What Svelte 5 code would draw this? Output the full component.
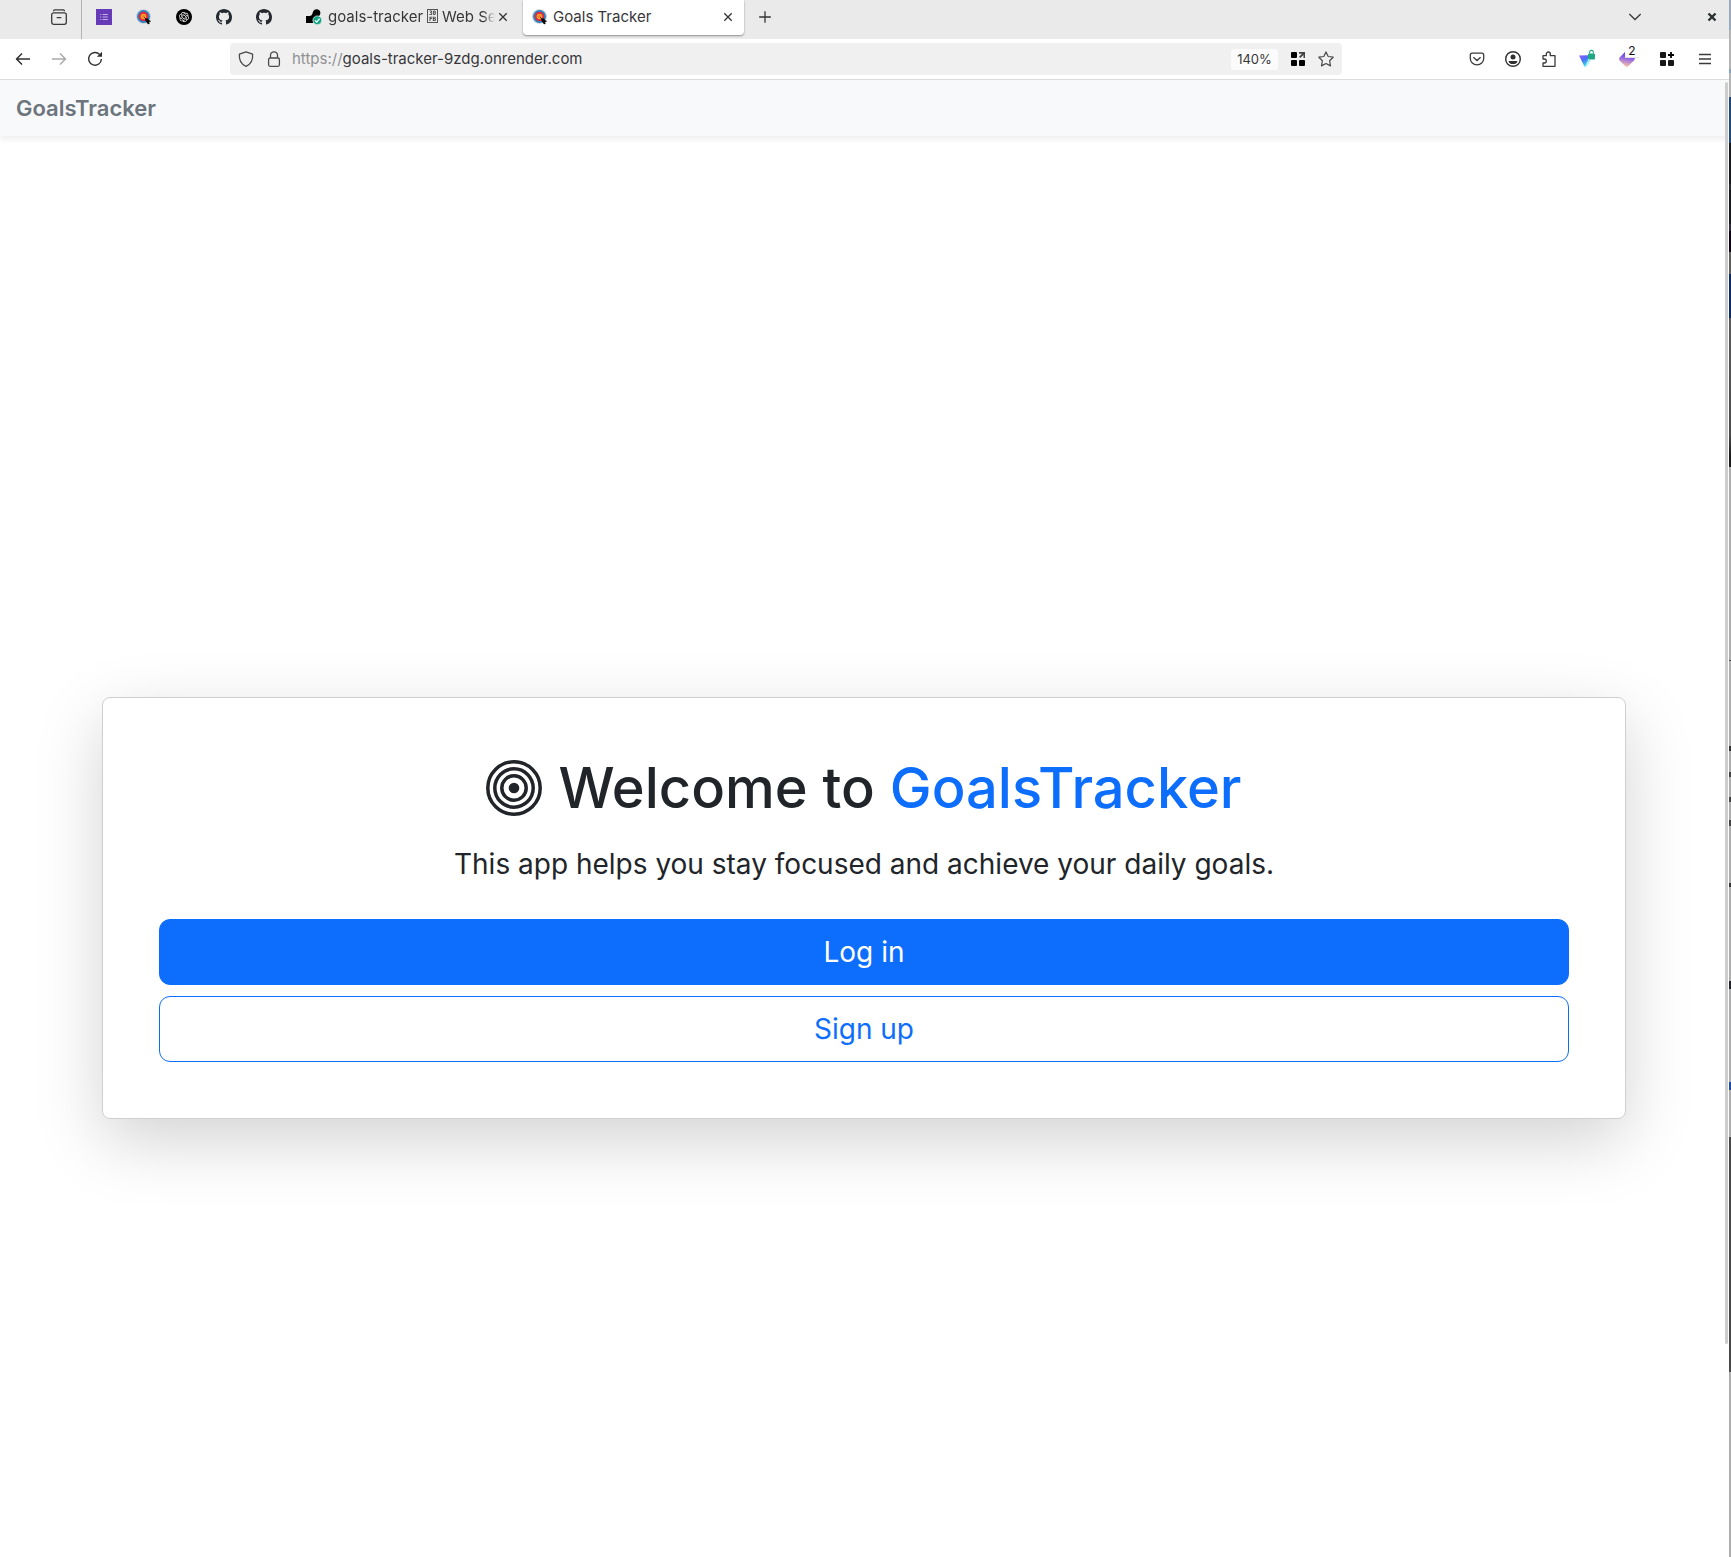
<script>
  const github =
    'M8 0C3.58 0 0 3.58 0 8c0 3.54 2.29 6.53 5.47 7.59.4.07.55-.17.55-.38 0-.19-.01-.82-.01-1.49-2.01.37-2.53-.49-2.69-.94-.09-.23-.48-.94-.82-1.13-.28-.15-.68-.52-.01-.53.63-.01 1.08.58 1.23.82.72 1.21 1.87.87 2.33.66.07-.52.28-.87.51-1.07-1.78-.2-3.64-.89-3.64-3.95 0-.87.31-1.59.82-2.15-.08-.2-.36-1.02.08-2.12 0 0 .67-.21 2.2.82.64-.18 1.32-.27 2-.27s1.36.09 2 .27c1.53-1.04 2.2-.82 2.2-.82.44 1.1.16 1.92.08 2.12.51.56.82 1.27.82 2.15 0 3.07-1.87 3.75-3.65 3.95.29.25.54.73.54 1.48 0 1.07-.01 1.93-.01 2.2 0 .21.15.46.55.38A8.01 8.01 0 0 0 16 8c0-4.42-3.58-8-8-8z';
  const knot =
    'M22.2819 9.8211a5.9847 5.9847 0 0 0-.5157-4.9108 6.0462 6.0462 0 0 0-6.5098-2.9A6.0651 6.0651 0 0 0 4.9807 4.1818a5.9847 5.9847 0 0 0-3.9977 2.9 6.0462 6.0462 0 0 0 .7427 7.0966 5.98 5.98 0 0 0 .511 4.9107 6.051 6.051 0 0 0 6.5146 2.9001A5.9847 5.9847 0 0 0 13.2599 24a6.0557 6.0557 0 0 0 5.7718-4.2058 5.9894 5.9894 0 0 0 3.9977-2.9001 6.0557 6.0557 0 0 0-.7475-7.0729zm-9.022 12.6081a4.4755 4.4755 0 0 1-2.8764-1.0408l.1419-.0804 4.7783-2.7582a.7948.7948 0 0 0 .3927-.6813v-6.7369l2.02 1.1686a.071.071 0 0 1 .038.052v5.5826a4.504 4.504 0 0 1-4.4945 4.4944zm-9.6607-4.1254a4.4708 4.4708 0 0 1-.5346-3.0137l.142.0852 4.783 2.7582a.7712.7712 0 0 0 .7806 0l5.8428-3.3685v2.3324a.0804.0804 0 0 1-.0332.0615L9.74 19.9502a4.4992 4.4992 0 0 1-6.1408-1.6464zM2.3408 7.8956a4.485 4.485 0 0 1 2.3655-1.9728V11.6a.7664.7664 0 0 0 .3879.6765l5.8144 3.3543-2.0201 1.1685a.0757.0757 0 0 1-.071 0l-4.8303-2.7865A4.504 4.504 0 0 1 2.3408 7.872zm16.5963 3.8558L13.1038 8.364 15.1192 7.2a.0757.0757 0 0 1 .071 0l4.8303 2.7913a4.4944 4.4944 0 0 1-.6765 8.1042v-5.6772a.79.79 0 0 0-.407-.667zm2.0107-3.0231l-.142-.0852-4.7735-2.7818a.7759.7759 0 0 0-.7854 0L9.409 9.2297V6.8974a.0662.0662 0 0 1 .0284-.0615l4.8303-2.7866a4.4992 4.4992 0 0 1 6.6802 4.66zM8.3065 12.863l-2.02-1.1638a.0804.0804 0 0 1-.038-.0567V6.0742a4.4992 4.4992 0 0 1 7.3757-3.4537l-.142.0805L8.704 5.459a.7948.7948 0 0 0-.3927.6813zm1.0976-2.3654l2.602-1.4998 2.6069 1.4998v2.9994l-2.5974 1.4997-2.6067-1.4997Z';
  let address = $state('goals-tracker-9zdg.onrender.com');
</script>

{#snippet target()}
  <svg class="icon" viewBox="0 0 16 16" aria-hidden="true">
    <circle cx="7.5" cy="7.5" r="7.3" fill="#b9cbd9" />
    <circle cx="7.5" cy="7.5" r="6.4" fill="#2f82bf" />
    <circle cx="7.5" cy="7.5" r="4.7" fill="#e5273c" />
    <circle cx="7.5" cy="7.5" r="2.8" fill="#fba928" />
    <circle cx="7.5" cy="7.5" r="1.2" fill="none" stroke="#e0662a" stroke-width=".7" />
    <path d="M7.8 7.8l3 3" stroke="#5a2a20" stroke-width="1" />
    <path d="M9.4 9.2l2.6.3 1 1.5 1.8 1-.4 1-1.2-.2.4 2.2-1.6.2-1.6-2-1.2-2z" fill="#0b0b0b" />
  </svg>
{/snippet}

{#snippet cross()}
  <svg class="icon" viewBox="0 0 16 16" aria-hidden="true">
    <path d="M4.3 4.3l7.4 7.4M11.7 4.3l-7.4 7.4" fill="none" stroke="#333" stroke-width="1.3" />
  </svg>
{/snippet}

<div class="desktop">
  <div class="browser">
    <header class="tabs">
      <button class="library" aria-label="Recently closed and synced tabs">
        <svg class="icon" viewBox="0 0 16 16" fill="none" stroke="#3a3a3d" stroke-width="1.3" stroke-linecap="round">
          <path d="M2.6 1.7Q3 .8 4 .8h8q1 0 1.4.9" />
          <rect x=".7" y="3.8" width="14.6" height="11.5" rx="2" />
          <path d="M6.2 8.7h3.6" />
        </svg>
      </button>
      <nav class="pinned" aria-label="Pinned tabs">
        <button aria-label="Form">
          <svg class="icon" viewBox="0 0 16 16">
            <rect width="16" height="16" fill="#673ab7" />
            <path d="M6.5 5.5h5.3M6.5 8h5.3M6.5 10.5h5.3M4.2 5.5h1M4.2 8h1M4.2 10.5h1" stroke="#c3b2e2" stroke-width="1" />
          </svg>
        </button>
        <button aria-label="Goals Tracker pinned">{@render target()}</button>
        <button aria-label="Chat">
          <svg class="icon" viewBox="0 0 16 16">
            <circle cx="8" cy="8" r="8" fill="#000" />
            <g transform="translate(3 3) scale(.4167)"><path d={knot} fill="#fff" /></g>
          </svg>
        </button>
        <button aria-label="Repository"><svg class="icon" viewBox="0 0 16 16"><path d={github} fill="#24292f" /></svg></button>
        <button aria-label="Pull requests"><svg class="icon" viewBox="0 0 16 16"><path d={github} fill="#24292f" /></svg></button>
      </nav>
      <div class="tab first">
        <svg class="icon" viewBox="0 0 16 16" aria-hidden="true">
          <path d="M0 14V7h3.2c2 0 3-1 3.4-3C7 1.6 8.6.2 10.6.2c2.2 0 3.8 1.7 3.8 3.7 0 2.2-1.7 3.8-3.9 3.8-2 0-3 1.3-3 3V14z" fill="#000" />
          <circle cx="11.3" cy="11.3" r="4.4" fill="#12a583" stroke="#ebebeb" stroke-width=".7" />
          <path d="M9 11.4l1.7 1.7 2.9-3.4" fill="none" stroke="#fff" stroke-width="1.3" />
        </svg>
        <span class="title fade"><span>goals-tracker</span><span class="glyph"><span>30</span><span>FB</span></span><span>Web Se</span></span>
        <button class="close" aria-label="Close goals-tracker tab">{@render cross()}</button>
      </div>
      <div class="tab active">
        {@render target()}
        <span class="title">Goals Tracker</span>
        <button class="close" aria-label="Close Goals Tracker tab">{@render cross()}</button>
      </div>
      <button class="tool new" aria-label="New tab">
        <svg class="icon" viewBox="0 0 16 16"><path d="M8 2.2v11.6M2.2 8h11.6" stroke="#333" stroke-width="1.3" /></svg>
      </button>
      <button class="tool list" aria-label="List all tabs">
        <svg class="icon" viewBox="0 0 16 16"><path d="M2.3 5l5.7 5.5L13.7 5" fill="none" stroke="#3a3a3d" stroke-width="1.3" /></svg>
      </button>
      <button class="tool quit" aria-label="Close window">
        <svg class="icon" viewBox="0 0 16 16"><path d="M4.5 4.5l7 7M11.5 4.5l-7 7" stroke="#2a2f31" stroke-width="2.4" /></svg>
      </button>
    </header>

    <div class="toolbar">
      <div class="group">
        <button class="tool" aria-label="Back">
          <svg class="icon" viewBox="0 0 16 16" fill="none" stroke="#303033" stroke-width="1.5" stroke-linejoin="round"><path d="M15 8H1.5M7 2.5L1.5 8 7 13.5" /></svg>
        </button>
        <button class="tool" aria-label="Forward" disabled>
          <svg class="icon" viewBox="0 0 16 16" fill="none" stroke="#a9a9aa" stroke-width="1.5" stroke-linejoin="round"><path d="M1 8h13.5M9 2.5L14.5 8 9 13.5" /></svg>
        </button>
        <button class="tool" aria-label="Reload">
          <svg class="icon" viewBox="0 0 16 16"><path d="M12.8 3.6A6.4 6.4 0 1 0 14.4 8" fill="none" stroke="#303033" stroke-width="1.4" /><path d="M15 .8v5H9.8z" fill="#303033" /></svg>
        </button>
      </div>
      <div class="url">
        <svg class="icon" viewBox="0 0 16 16" fill="none" stroke="#4b4b4d" stroke-width="1.3" stroke-linejoin="round"><path d="M8 .8l6.6 2.3c.5 4.9-1.2 9.8-6.6 12.2C2.6 12.9.9 8 1.4 3.1z" /></svg>
        <svg class="icon" viewBox="0 0 16 16" fill="none" stroke="#4b4b4d" stroke-width="1.3"><rect x="2.6" y="7" width="10.8" height="8.3" rx="1.5" /><path d="M4.5 7V4.3a3.5 3.5 0 0 1 7 0V7" /></svg>
        <div class="address">
          <label for="address">https://</label>
          <input id="address" type="text" bind:value={address} spellcheck="false" />
        </div>
        <button class="zoom">140%</button>
        <button class="small" aria-label="Open in container">
          <svg class="icon" viewBox="0 0 16 16"><rect x="1" y="1" width="6" height="6" rx="1" /><rect x="1" y="9" width="6" height="6" rx="1" /><rect x="9" y="9" width="6" height="6" rx="1" /><path d="M9 1h6v6h-1.5V4L10.3 7 9 5.8 12 2.7H9z" fill="#444" /></svg>
        </button>
        <button class="small" aria-label="Bookmark this page">
          <svg class="icon" viewBox="0 0 16 16" fill="none" stroke="#4b4b4d" stroke-width="1.2" stroke-linejoin="round"><path d="M8 .9l2.2 4.6 5 .7-3.6 3.5.9 5.2L8 12.5l-4.5 2.4.9-5.2L.8 6.2l5-.7z" /></svg>
        </button>
      </div>
      <div class="group">
        <button class="tool" aria-label="Save to Pocket">
          <svg class="icon" viewBox="0 0 16 16" fill="none" stroke="#3a3a3d" stroke-width="1.3" stroke-linecap="round"><path d="M3 2.2h10a1.7 1.7 0 0 1 1.7 1.7v3.5a6.7 6.4 0 0 1-13.4 0V3.9A1.7 1.7 0 0 1 3 2.2zM4.7 6.6L8 9.6l3.3-3" /></svg>
        </button>
        <button class="tool" aria-label="Account">
          <svg class="icon" viewBox="0 0 16 16"><circle cx="8" cy="8" r="7.3" fill="none" stroke="#303033" stroke-width="1.4" /><circle cx="8" cy="6" r="2.5" fill="#303033" /><path d="M3.7 9.9h8.6c.3 1.8-2 3.2-4.3 3.2S3.4 11.7 3.7 9.9z" fill="#303033" /></svg>
        </button>
        <button class="tool" aria-label="Extensions">
          <svg class="icon" viewBox="0 0 16 16" fill="none" stroke="#3a3a3d" stroke-width="1.3" stroke-linejoin="round"><path d="M2 8V4.7h3.3V3a2 2 0 0 1 4 0v1.7H14v10.6H2V12h1.3a2 2 0 0 0 0-4z" /></svg>
        </button>
        <button class="tool wide" aria-label="VPN">
          <svg class="icon" viewBox="0 0 16 16">
            <defs><linearGradient id="vpn" x1="0" y1="0" x2=".6" y2="1"><stop offset="0" stop-color="#9a5cff" /><stop offset=".45" stop-color="#4a6cf2" /><stop offset="1" stop-color="#3ee8f0" /></linearGradient></defs>
            <path d="M0 4.6l9-.4v5h2.5L7 15.7Q5.8 16 5.2 15z" fill="url(#vpn)" />
            <path d="M9 9.2h2.6L7 15.7l-1-.4z" fill="#a8f4f8" />
            <rect x="9" y="2.5" width="7" height="6" rx="1" fill="#1fa884" />
            <path d="M10.6 2.5V1.3a1.9 1.9 0 0 1 3.8 0v1.2" fill="none" stroke="#1fa884" stroke-width="1.1" />
          </svg>
        </button>
        <button class="tool wide badged" aria-label="Password manager, 2 entries">
          <svg class="icon" viewBox="0 0 16 16">
            <defs><linearGradient id="gem" x1=".6" y1="0" x2=".4" y2="1"><stop offset="0" stop-color="#4a32f0" /><stop offset=".4" stop-color="#8b62e8" /><stop offset="1" stop-color="#ffc7a8" /></linearGradient></defs>
            <path d="M6 1v4h9.5q.8 2 0 4L9.3 15.3q-1.500 1.200-3 0L.5 9.600Q-.5 8 .5 6.600z" fill="url(#gem)" />
          </svg>
          <span class="badge">2</span>
        </button>
        <button class="tool wide" aria-label="Add container">
          <svg class="icon" viewBox="0 0 16 16"><g fill="#18181a"><rect x="1" y="1" width="6" height="6" rx="1" /><rect x="1" y="9" width="6" height="6" rx="1" /><rect x="9" y="9" width="6" height="6" rx="1" /></g><path d="M12 1v6M9 4h6" stroke="#000" stroke-width="1.8" /></svg>
        </button>
        <button class="tool" aria-label="Menu">
          <svg class="icon" viewBox="0 0 16 16"><path d="M2 3.500h12M2 8h12M2 12.500h12" stroke="#3a3a3d" stroke-width="1.3" /></svg>
        </button>
      </div>
    </div>

    <div class="viewport">
      <nav class="navbar" aria-label="Main"><a href="/">GoalsTracker</a></nav>
      <main>
        <section class="card">
          <h1>
            <svg class="bullseye" viewBox="0 0 56 56" aria-hidden="true" fill="none" stroke="#212529" stroke-width="3.5">
              <circle cx="28" cy="28" r="26.2" />
              <circle cx="28" cy="28" r="19.2" />
              <circle cx="28" cy="28" r="12.2" />
              <circle cx="28" cy="28" r="5.3" fill="#212529" stroke="none" />
            </svg>
            <span>Welcome to <span class="accent">GoalsTracker</span></span>
          </h1>
          <p>This app helps you stay focused and achieve your daily goals.</p>
          <div class="actions">
            <a class="btn primary" href="/login">Log in</a>
            <a class="btn outline" href="/signup">Sign up</a>
          </div>
        </section>
      </main>
      <div class="scrollbar"></div>
    </div>
  </div>
  <div class="behind"></div>
</div>

<style>
  :global(body) { margin: 0; background: #fff; }
  * { box-sizing: border-box; }
  .desktop {
    display: flex;
    height: 100vh;
    overflow: hidden;
    font-family: Inter, "Noto Sans", sans-serif;
    color: #212529;
  }
  .browser { flex: 1; min-width: 0; display: flex; flex-direction: column; background: #fff; }
  .behind {
    width: 2px;
    background: linear-gradient(
      #9aa8bb 0 30px, #b4b4b4 30px 69px, #8da0b9 69px 73px, #b4b4b4 73px 97px,
      #24477a 97px 143px, #17171f 143px 184px, #2a2a35 184px 190px, #17171f 190px 224px,
      #2f2b3c 224px 231px, #0d0216 231px 252px, #5f5f5b 252px 274px, #0c2b66 274px 318px,
      #5a5a5a 318px, #4c4c4c 435px, #1c1c1c 455px 467px,
      #adadad 467px 660px, #444 660px 661px, #adadad 661px 746px, #333 746px 751px,
      #adadad 751px 772px, #444 772px 777px, #adadad 777px 797px, #444 797px 802px,
      #adadad 802px 820px, #444 820px 826px, #adadad 826px 883px, #333 883px 887px,
      #adadad 887px 981px, #22222a 981px 989px, #adadad 989px 1082px, #1d4da3 1082px 1090px,
      #adadad 1090px 1137px, #484848 1137px 1372px, #adadad 1372px
    );
  }
  button { border: 0; padding: 0; background: none; font: inherit; color: inherit; display: flex; align-items: center; justify-content: center; }
  .icon { width: 16px; height: 16px; flex: none; display: block; overflow: visible; }

  .tabs { height: 39px; flex: none; display: flex; align-items: flex-start; background: #eaeaea; }
  .tabs > button, .pinned button { height: 34px; }
  .library { width: 82px; padding-left: 36px; border-right: 1px solid #b4b4b4; }
  .tabs > .library { height: 39px; padding-bottom: 5px; }
  .pinned { display: flex; padding: 0 8px 0 2px; }
  .pinned button { width: 40px; }
  .tab { flex: none; width: 221px; height: 35px; display: flex; align-items: center; gap: 5px; padding: 0 8px 1px 9px; font-size: 15px; line-height: 20px; color: #37373a; }
  .first { width: 231px; gap: 6px; padding: 0 12px 1px 14px; }
  .first .close { margin-left: -6px; }
  .active { background: #fff; border-radius: 0 0 4px 4px; box-shadow: 0 1px 2px rgba(0, 0, 0, .4); }
  .title { flex: 1; min-width: 0; white-space: nowrap; }
  .fade { display: flex; align-items: center; gap: 4px; mask-image: linear-gradient(to left, transparent, #000 12px); }
  .glyph {
    display: grid; flex: none; width: 11px; height: 14px; margin-top: -2px;
    border: 1px solid #555; align-content: center; justify-items: center;
    font: 700 6px/6px "DejaVu Sans Mono", monospace;
  }
  .close { width: 16px; }
  .tool { width: 36px; height: 32px; }
  .tool.wide { width: 40px; }
  .new { margin-left: 3px; }
  .list { margin-left: auto; margin-right: 42px; }
  .tool.quit { width: 34px; }

  .toolbar { height: 41px; flex: none; display: flex; align-items: center; justify-content: space-between; padding: 0 6px 0 5px; border-bottom: 1px solid #dcdcdc; }
  .group { display: flex; }
  .url { flex: 1; margin: 0 117px; height: 32px; display: flex; align-items: center; gap: 12px; padding: 0 8px; background: #f0f0f0; border-radius: 4px; }
  .address { flex: 1; display: flex; align-items: center; margin-left: -2px; font-size: 15px; line-height: 24px; }
  .address label { color: #919193; }
  .address input { flex: 1; min-width: 0; border: 0; padding: 0; background: none; font: inherit; color: #37373a; outline: 0; }
  .zoom { width: 47px; height: 21px; border-radius: 3px; background: #fbfbfb; font-size: 13px; color: #37373a; }
  .small { width: 16px; }
  .badged { position: relative; }
  .badge { position: absolute; top: 2px; left: 18px; width: 14px; height: 12px; background: #fff; font-size: 12px; line-height: 12px; color: #111; text-align: center; box-shadow: 0 1px 0 #e4e4e4; }

  .viewport { position: relative; flex: 1; min-height: 0; overflow: hidden; }
  .navbar { height: 56px; display: flex; align-items: center; padding: 0 16px; background: #f8f9fb; box-shadow: 0 3px 6px rgba(0, 0, 0, .075); }
  .navbar a { font-size: 22px; line-height: 34px; font-weight: 600; color: #6c757d; text-decoration: none; }
  main { height: 100%; margin-top: 33px; padding: 0 103px 0 102px; display: flex; align-items: center; }
  .card { flex: 1; padding: 56px; border: 1px solid #cfcfcf; border-radius: 8px; background: #fff; box-shadow: 0 22px 67px rgba(0, 0, 0, .175); text-align: center; }
  h1 { display: flex; align-items: center; justify-content: center; gap: 16px; margin: 0 0 21px; font-size: 56px; line-height: 68px; font-weight: 500; }
  .bullseye { width: 56px; height: 56px; flex: none; }
  .accent { color: #0d6efd; }
  p { margin: 0 0 34px; font-size: 28px; line-height: 42px; }
  .actions { display: grid; gap: 11px; }
  .btn { padding: 11px 22px; border: 1px solid #0d6efd; border-radius: 11px; font-size: 28px; line-height: 42px; text-decoration: none; }
  .primary { background: #0d6efd; color: #fff; }
  .outline { color: #0d6efd; }
  .scrollbar { position: absolute; top: 2px; right: 1px; width: 3px; height: 1262px; border-radius: 2px; background: #cdcdcd; }
</style>
